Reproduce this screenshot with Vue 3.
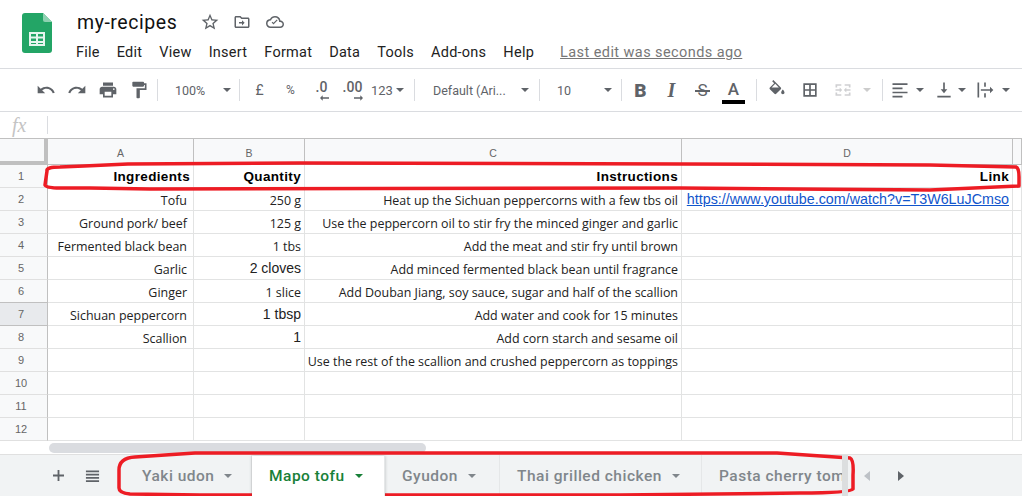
<template>
  <div class="app">
    <header class="head">
      <svg class="logo" viewBox="0 0 30 40">
        <path d="M3 0h18l9 9v28a3 3 0 0 1-3 3H3a3 3 0 0 1-3-3V3a3 3 0 0 1 3-3z" fill="#23a566" />
        <path d="M21 0l9 9h-7a2 2 0 0 1-2-2z" fill="#8ed1b1" />
        <path d="M7 19h16v14H7zm2 2v2.5h5V21zm7 0v2.5h5V21zm-7 4.5V28h5v-2.5zm7 0V28h5v-2.5zM9 30v1h5v-1zm7 0v1h5v-1z" fill="#e6f5ee" fill-rule="evenodd" />
      </svg>
      <div class="head-main">
        <div class="title-row">
          <span class="title">my-recipes</span>
          <svg class="ti ti-star" viewBox="0 0 24 24"><path d="M22 9.24l-7.19-.62L12 2 9.19 8.63 2 9.24l5.46 4.73L5.82 21 12 17.27 18.18 21l-1.63-7.03L22 9.24zM12 15.4l-3.76 2.27 1-4.28-3.32-2.88 4.38-.38L12 6.1l1.71 4.04 4.38.38-3.32 2.88 1 4.28L12 15.4z" /></svg>
          <svg class="ti" viewBox="0 0 24 24"><path d="M20 6h-8l-2-2H4c-1.1 0-2 .9-2 2v12c0 1.1.9 2 2 2h16c1.1 0 2-.9 2-2V8c0-1.1-.9-2-2-2zm0 12H4V6h5.2l2 2H20v10z" /><path d="M12 9.5l3.5 3.5-3.5 3.5V14H8v-2h4z" /></svg>
          <svg class="ti" viewBox="0 0 24 24"><path d="M19.35 10.04A7.49 7.49 0 0 0 12 4C9.11 4 6.6 5.64 5.35 8.04A5.99 5.99 0 0 0 0 14c0 3.31 2.69 6 6 6h13c2.76 0 5-2.24 5-5 0-2.64-2.05-4.78-4.65-4.96zM19 18H6c-2.21 0-4-1.79-4-4s1.79-4 4-4h.71C7.37 7.69 9.48 6 12 6c3.04 0 5.5 2.46 5.5 5.5v.5H19c1.66 0 3 1.34 3 3s-1.34 3-3 3z" /><path d="M10 15.2l-2.5-2.5 1.1-1.1 1.4 1.4 4.4-4.4 1.1 1.1z" /></svg>
        </div>
        <nav class="menu">
          <span v-for="m in menus" :key="m">{{ m }}</span>
          <a class="last-edit">Last edit was seconds ago</a>
        </nav>
      </div>
    </header>

    <div class="toolbar">
      <div class="tb w31"><svg viewBox="0 0 24 24"><path d="M12.5 8c-2.65 0-5.05.99-6.9 2.6L2 7v9h9l-3.62-3.62c1.39-1.16 3.16-1.88 5.12-1.88 3.54 0 6.55 2.31 7.6 5.5l2.37-.78C21.08 11.03 17.15 8 12.5 8z" /></svg></div>
      <div class="tb w31"><svg viewBox="0 0 24 24"><path d="M18.4 10.6C16.55 8.99 14.15 8 11.5 8c-4.65 0-8.58 3.03-9.96 7.22L3.9 16c1.05-3.19 4.05-5.5 7.6-5.5 1.95 0 3.73.72 5.12 1.88L13 16h9V7l-3.6 3.6z" /></svg></div>
      <div class="tb w31"><svg viewBox="0 0 24 24"><path d="M19 8H5c-1.66 0-3 1.34-3 3v6h4v4h12v-4h4v-6c0-1.66-1.34-3-3-3zm-3 11H8v-5h8v5zm3-7c-.55 0-1-.45-1-1s.45-1 1-1 1 .45 1 1-.45 1-1 1zm-1-9H6v4h12V3z" /></svg></div>
      <div class="tb w31"><svg viewBox="0 0 24 24"><path d="M18 4V3c0-.55-.45-1-1-1H5c-.55 0-1 .45-1 1v4c0 .55.45 1 1 1h12c.55 0 1-.45 1-1V6h1v4H9v11c0 .55.45 1 1 1h2c.55 0 1-.45 1-1v-9h8V4h-3z" /></svg></div>
      <i class="sep sep-first"></i>
      <div class="tb sel zoom"><span>100%</span><i class="caret"></i></div>
      <i class="sep"></i>
      <div class="tb w31 txt after-sep">£</div>
      <div class="tb w31 txt small">%</div>
      <div class="tb w31 dec"><span>.0</span><svg class="arrow" viewBox="0 0 10 6"><path d="M0 3l3-3v2.3h7v1.4H3V6z" /></svg></div>
      <div class="tb w31 dec"><span>.00</span><svg class="arrow right" viewBox="0 0 10 6"><path d="M10 3L7 0v2.3H0v1.4h7V6z" /></svg></div>
      <div class="tb sel num"><span>123</span><i class="caret"></i></div>
      <i class="sep"></i>
      <div class="tb sel font"><span>Default (Ari...</span><i class="caret"></i></div>
      <i class="sep"></i>
      <div class="tb sel size"><span>10</span><i class="caret"></i></div>
      <i class="sep"></i>
      <div class="tb w31 glyph bold after-sep-b">B</div>
      <div class="tb w31 glyph ital">I</div>
      <div class="tb w31 glyph strike">S</div>
      <div class="tb w31 colour"><span>A</span><i class="colour-bar"></i></div>
      <i class="sep sep-colour"></i>
      <div class="tb w33 after-sep-b"><svg viewBox="0 0 24 24"><path d="M16.56 8.94L7.62 0 6.21 1.41l2.38 2.38-5.15 5.15c-.59.59-.59 1.54 0 2.12l5.5 5.5c.29.29.68.44 1.06.44s.77-.15 1.06-.44l5.5-5.5c.59-.58.59-1.53 0-2.12zM19 11.5s-2 2.17-2 3.5c0 1.1.9 2 2 2s2-.9 2-2c0-1.33-2-3.5-2-3.5z" /><path d="M9.9 4.6L5.6 8.9h8.6z" fill="#fff" /></svg></div>
      <div class="tb w33"><svg viewBox="0 0 24 24"><path d="M4 4h16v16H4zm2 2v5h5V6zm7 0v5h5V6zm-7 7v5h5v-5zm7 0v5h5v-5z" fill-rule="evenodd" /></svg></div>
      <div class="tb merge"><svg viewBox="0 0 24 24"><path d="M3 5h7v2H5v2H3zm11 0h7v4h-2V7h-5zM3 15h2v2h5v2H3zm16 0h2v4h-7v-2h5zM3 11h5V9l3 3-3 3v-2H3zm18 0h-5V9l-3 3 3 3v-2h5z" /></svg><i class="caret off"></i></div>
      <i class="sep sep-merge"></i>
      <div class="tb drop w-align"><svg viewBox="0 0 24 24"><path d="M3 4h18v2H3zm0 5h12v2H3zm0 5h18v2H3zm0 5h12v2H3z" /></svg><i class="caret"></i></div>
      <div class="tb drop w-valign"><svg viewBox="0 0 24 24"><path d="M4 19h16v2H4zM11 3h2v8h3l-4 5-4-5h3z" /></svg><i class="caret"></i></div>
      <div class="tb drop w-wrap"><svg viewBox="0 0 24 24"><path d="M3 3h2v18H3zm8 0h2v5h-2zm0 13h2v5h-2zM7 11h11V8l4 4-4 4v-3H7z" /></svg><i class="caret"></i></div>
    </div>

    <div class="formula">
      <span class="fx">fx</span>
      <i class="fx-sep"></i>
    </div>

    <div class="sheet">
      <div class="corner"></div>
      <div v-for="c in columns" :key="c" class="col-head">{{ c }}</div>
      <template v-for="(r, i) in rows" :key="i">
        <div class="row-head" :class="{ picked: i === 6 }">{{ i + 1 }}</div>
        <div class="cell col-a" :class="{ strong: i === 0 }">{{ r[0] }}</div>
        <div class="cell" :class="{ strong: i === 0, arial: isArial(r[1]) }">{{ r[1] }}</div>
        <div class="cell" :class="{ strong: i === 0 }">{{ r[2] }}</div>
        <div class="cell" :class="{ strong: i === 0, link: i === 1 }">{{ r[3] }}</div>
        <div class="cell"></div>
      </template>
    </div>

    <div class="scroll">
      <div class="scroll-gap"></div>
      <div class="thumb"></div>
    </div>

    <footer class="tabs">
      <div class="tab-tool plus"><svg viewBox="0 0 12 12"><path d="M5 0h2v5h5v2H7v5H5V7H0V5h5z" /></svg></div>
      <div class="tab-tool list"><svg viewBox="0 0 16 14"><path d="M1 1h14v2H1zm0 3.5h14v2H1zM1 8h14v2H1zm0 3.5h14v2H1z" /></svg></div>
      <div class="strip">
        <div v-for="t in tabs" :key="t.name" class="tab" :class="[t.cls, { active: t.active }]">
          <span>{{ t.name }}</span><i class="caret"></i>
        </div>
      </div>
      <i class="tab-arrow left"></i>
      <i class="tab-arrow right"></i>
    </footer>

    <svg class="marks" viewBox="0 0 1022 496">
      <path d="M47 171 Q46 167 60 167 L84 166 L128 164 L300 163 L680 164 L930 165 L1016 167 Q1019 168 1019 177 L1019 186 L930 190 L680 188 L150 189 L90 188 L60 188 Q46 188 45 185 Z" />
      <path d="M119 470 Q119 458 135 457 L195 453 L777 453 L850 458 Q854 460 853 475 L853 489 Q850 493 800 493 L620 495 L200 495 L130 494 Q119 493 119 488 Z" />
    </svg>
  </div>
</template>

<script setup>
const menus = ['File', 'Edit', 'View', 'Insert', 'Format', 'Data', 'Tools', 'Add-ons', 'Help']
const columns = ['A', 'B', 'C', 'D', '']
const rows = [
  ['Ingredients', 'Quantity', 'Instructions', 'Link'],
  ['Tofu', '250 g', 'Heat up the Sichuan peppercorns with a few tbs oil', 'https://www.youtube.com/watch?v=T3W6LuJCmso'],
  ['Ground pork/ beef', '125 g', 'Use the peppercorn oil to stir fry the minced ginger and garlic', ''],
  ['Fermented black bean', '1 tbs', 'Add the meat and stir fry until brown', ''],
  ['Garlic', '2 cloves', 'Add minced fermented black bean until fragrance', ''],
  ['Ginger', '1 slice', 'Add Douban Jiang, soy sauce, sugar and half of the scallion', ''],
  ['Sichuan peppercorn', '1 tbsp', 'Add water and cook for 15 minutes', ''],
  ['Scallion', '1', 'Add corn starch and sesame oil', ''],
  ['', '', 'Use the rest of the scallion and crushed peppercorn as toppings', ''],
  ['', '', '', ''],
  ['', '', '', ''],
  ['', '', '', '']
]
const tabs = [
  { name: 'Yaki udon', cls: 't1' },
  { name: 'Mapo tofu', cls: 't2', active: true },
  { name: 'Gyudon', cls: 't3' },
  { name: 'Thai grilled chicken', cls: 't4' },
  { name: 'Pasta cherry tomato', cls: 't5' }
]
function isArial(v) { return ['2 cloves', '1 tbsp', '1'].includes(v) }
</script>

<style>
html, body { margin: 0; background: #fff; overflow: hidden; }
</style>

<style scoped>
.app { position: relative; width: 1022px; height: 496px; overflow: hidden; display: flex; flex-direction: column; font-family: Roboto, "Liberation Sans", sans-serif; background: #fff; color: #444; }

.head { height: 69px; box-sizing: border-box; flex: none; display: flex; border-bottom: 1px solid #dadce0; }
.logo { width: 30px; height: 40px; margin: 13px 0 0 22px; flex: none; }
.head-main { margin-left: 24px; }
.title-row { display: flex; align-items: center; height: 28px; margin-top: 8px; }
.title { font-size: 19.5px; letter-spacing: 0.55px; color: #111; width: 123px; padding-left: 1px; }
.ti { width: 18px; height: 18px; fill: #5f6368; margin-right: 15px; flex: none; }
.ti-star { width: 20px; height: 20px; margin-right: 13px; }
.menu { display: flex; align-items: center; height: 20px; margin-top: 6px; font-size: 14.5px; letter-spacing: 0.25px; color: #222; gap: 17px; white-space: nowrap; }
.last-edit { color: #777; text-decoration: underline; margin-left: 9px; letter-spacing: 0.42px; }

.toolbar { flex: none; display: flex; align-items: center; padding-left: 30px; border-bottom: 1px solid #dadce0; box-sizing: border-box; height: 43px; }
.tb { height: 24px; display: flex; align-items: center; justify-content: center; flex: none; color: #5f6368; font-size: 12.5px; }
.tb svg { width: 20px; height: 20px; fill: #5f6368; }
.w31 { width: 31px; }
.w33 { width: 33px; }
.sep { width: 1px; height: 22px; background: #dadce0; flex: none; }
.sep-first { margin-left: 3px; }
.after-sep { margin-left: 4px; }
.after-sep-b { margin-left: 3px; }
.sep-colour { margin-left: 7px; }
.caret { display: block; flex: none; width: 0; height: 0; border-left: 4.5px solid transparent; border-right: 4.5px solid transparent; border-top: 4.5px solid #5f6368; }
.caret.off { border-top-color: #ccc; }
.sel { justify-content: space-between; box-sizing: border-box; }
.zoom { width: 81px; padding: 0 8px 0 17px; }
.num { width: 46px; padding-left: 3px; padding-right: 10px; font-size: 13px; }
.font { width: 124px; padding: 0 10px 0 18px; }
.size { width: 81px; padding: 0 9px 0 17px; }
.txt { font-size: 14px; }
.small { font-size: 12px; }
.dec { position: relative; align-items: flex-start; font-size: 14px; padding-top: 1px; box-sizing: border-box; line-height: 16px; font-weight: 500; }
.dec .arrow { position: absolute; width: 9px; height: 6px; left: 14px; top: 17px; }
.dec .arrow.right { left: 17px; }
.glyph { font-size: 19px; }
.bold { font-weight: 900; }
.ital { font-style: italic; font-weight: 700; font-family: "Liberation Serif", serif; font-size: 20px; }
.strike { font-weight: 400; font-size: 17px; position: relative; }
.strike::after { content: ""; position: absolute; left: 8px; right: 8px; top: 12px; height: 1.5px; background: #5f6368; }
.colour { flex-direction: column; height: 30px; justify-content: flex-start; font-size: 17px; font-weight: 500; line-height: 20px; padding-top: 4px; box-sizing: border-box; }
.colour-bar { display: block; width: 23px; height: 4px; background: #000; margin-top: 1px; flex: none; }
.merge { width: 48px; justify-content: flex-start; padding-left: 7px; box-sizing: border-box; gap: 10px; }
.merge svg { fill: #cfd0d2; }
.sep-merge { margin-left: 8px; }
.drop { justify-content: flex-start; padding-left: 7px; box-sizing: border-box; }
.w-align { width: 43px; gap: 6px; }
.w-valign { width: 49px; padding-left: 8px; gap: 4px; }
.w-wrap { width: 39px; padding-left: 0; gap: 7px; }

.formula { height: 27px; flex: none; display: flex; align-items: center; box-sizing: border-box; border-bottom: 1px solid #c0c0c0; }
.fx { width: 47px; padding-left: 12px; box-sizing: border-box; font-family: "Liberation Serif", serif; font-style: italic; font-size: 20px; color: #c4c4c4; }
.fx-sep { width: 1px; height: 18px; background: #dadce0; }

.sheet { flex: none; display: grid; grid-template-columns: 48px 146px 111px 377px 331px 9px; grid-template-rows: 26px repeat(12, 23px); height: 302px; font-family: "Open Sans", "Noto Sans", sans-serif; }
.corner { box-sizing: border-box; background: #f8f9fa; border-right: 4px solid #c0c0c0; border-bottom: 4px solid #c0c0c0; }
.col-head { display: flex; align-items: center; justify-content: center; box-sizing: border-box; background: #f8f9fa; border-right: 1px solid #c0c0c0; border-bottom: 1px solid #c0c0c0; padding-top: 2px; font-family: "Liberation Sans", sans-serif; font-size: 10.5px; color: #666; }
.row-head { display: flex; align-items: center; justify-content: center; box-sizing: border-box; background: #f8f9fa; border-right: 1px solid #c0c0c0; border-bottom: 1px solid #e0e0e0; font-family: "Liberation Sans", sans-serif; font-size: 11px; color: #666; padding-right: 5px; }
.row-head.picked { background: #e8eaed; box-shadow: 0 -1px 0 #c0c0c0; border-bottom-color: #c0c0c0; }
.cell { display: flex; align-items: center; justify-content: flex-end; box-sizing: border-box; border-right: 1px solid #e2e3e3; border-bottom: 1px solid #e2e3e3; padding: 2px 3px 0 0; font-size: 12.45px; color: #222; white-space: nowrap; overflow: hidden; }
.col-a { padding-right: 6px; }
.col-a.strong { padding-right: 3px; }
.strong { font-family: "Liberation Sans", sans-serif; font-weight: 700; font-size: 13.5px; letter-spacing: 0.35px; color: #000; padding-top: 0; }
.arial { font-family: "Liberation Sans", sans-serif; font-size: 14px; padding-top: 0; }
.link { font-family: "Liberation Sans", sans-serif; font-size: 14.3px; color: #1155cc; text-decoration: underline; overflow: visible; padding-top: 0; }

.scroll { height: 13px; flex: none; display: flex; background: #fff; }
.scroll-gap { width: 49px; }
.thumb { width: 377px; height: 10px; margin-top: 2px; border-radius: 5px; background: #dadce0; }

.tabs { flex: 1; display: flex; align-items: stretch; background: #f1f3f4; border-top: 1px solid #e0e0e0; }
.tab-tool { display: flex; align-items: center; justify-content: center; flex: none; color: #5f6368; }
.plus { width: 34px; margin-left: 41px; }
.plus svg { width: 11px; height: 11px; fill: #5f6368; }
.list { width: 34px; }
.list svg { width: 15px; height: 14px; fill: #5f6368; }
.strip { width: 726px; margin-left: 13px; display: flex; overflow: hidden; flex: none; position: relative; }
.strip::after { content: ""; position: absolute; right: 0; top: 0; bottom: 0; width: 6px; background: #dcdedf; z-index: 2; }
.tab { flex: none; display: flex; align-items: center; box-sizing: border-box; padding-left: 20px; gap: 10px; font-size: 15.5px; font-weight: 500; letter-spacing: 0.5px; color: #80868b; border-right: 1px solid #e5e7e8; white-space: nowrap; }
.tab .caret { border-top-color: #80868b; }
.t1 { width: 130px; }
.t2 { width: 133px; padding-left: 17px; }
.t3 { width: 115px; padding-left: 17px; }
.t4 { width: 202px; padding-left: 17px; }
.t5 { width: 146px; padding-left: 17px; color: #80868b; overflow: hidden; position: relative; }
.active { background: #fff; color: #188038; box-shadow: 0 0 3px rgba(60,64,67,.3); position: relative; z-index: 1; margin-top: 1px; }
.active .caret { border-top-color: #188038; }
.tab-arrow { width: 0; height: 0; align-self: center; flex: none; border-top: 5.5px solid transparent; border-bottom: 5.5px solid transparent; }
.tab-arrow.left { margin-left: 16px; border-right: 6px solid #bdc1c6; }
.tab-arrow.right { margin-left: 28px; border-left: 6px solid #5f6368; }

.marks { position: absolute; left: 0; top: 0; width: 1022px; height: 496px; pointer-events: none; fill: none; stroke: #ed1c24; stroke-width: 3.5px; stroke-linejoin: round; }
</style>
